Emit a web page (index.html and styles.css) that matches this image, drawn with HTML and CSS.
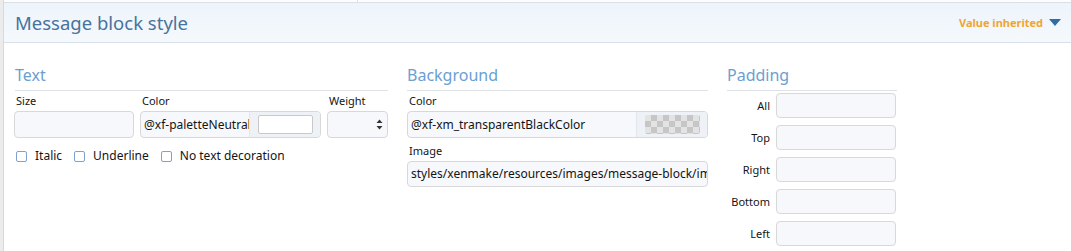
FILE: index.html
```html
<!DOCTYPE html>
<html lang="en">
<head>
    <meta charset="UTF-8">
    <meta name="viewport" content="width=device-width, initial-scale=1.0">
    <title>Message block style</title>
    <link rel="stylesheet" href="styles.css">
</head>
<body>

    <div class="frame">
        <!-- Leftover edge of the row above -->
        <div class="top-strip"><span class="top-divider"></span></div>

        <!-- Block header -->
        <div class="block-header">
            <h2 class="block-title">Message block style</h2>
            <span class="inherited">Value inherited <span class="caret"></span></span>
        </div>

        <div class="block-body">

            <!-- Text -->
            <div class="group group-text">
                <h3 class="group-title">Text</h3>
                <div class="field-row">
                    <div class="field field-size">
                        <label class="field-label">Size</label>
                        <div class="input"></div>
                    </div>
                    <div class="field field-color">
                        <label class="field-label">Color</label>
                        <div class="color-input">
                            <span class="color-value">@xf-paletteNeutral3</span>
                            <span class="color-swatch"><span class="swatch-box swatch-white"></span></span>
                        </div>
                    </div>
                    <div class="field field-weight">
                        <label class="field-label">Weight</label>
                        <div class="input select">
                            <svg width="7" height="11" viewBox="0 0 7 11">
                                <path d="M3.5 0.5 L6.5 4 L0.5 4 Z M3.5 10.5 L6.5 7 L0.5 7 Z" fill="#333"/>
                            </svg>
                        </div>
                    </div>
                </div>
                <div class="check-row">
                    <label class="check"><span class="box"></span>Italic</label>
                    <label class="check"><span class="box"></span>Underline</label>
                    <label class="check"><span class="box"></span>No text decoration</label>
                </div>
            </div>

            <!-- Background -->
            <div class="group group-bg">
                <h3 class="group-title">Background</h3>
                <label class="field-label">Color</label>
                <div class="color-input">
                    <span class="color-value">@xf-xm_transparentBlackColor</span>
                    <span class="color-swatch"><span class="swatch-box swatch-clear"></span></span>
                </div>
                <label class="field-label label-image">Image</label>
                <div class="input text-input">styles/xenmake/resources/images/message-block/image.png</div>
            </div>

            <!-- Padding -->
            <div class="group group-padding">
                <h3 class="group-title">Padding</h3>
                <div class="pad-row"><span class="pad-label">All</span><div class="input pad-input"></div></div>
                <div class="pad-row"><span class="pad-label">Top</span><div class="input pad-input"></div></div>
                <div class="pad-row"><span class="pad-label">Right</span><div class="input pad-input"></div></div>
                <div class="pad-row"><span class="pad-label">Bottom</span><div class="input pad-input"></div></div>
                <div class="pad-row"><span class="pad-label">Left</span><div class="input pad-input"></div></div>
            </div>

        </div>
    </div>

</body>
</html>
```

FILE: styles.css
```css
/* General Styles */
body {
    margin: 0;
    padding: 0;
    background-color: #ececec;
    font-family: "Segoe UI", "Noto Sans", "Open Sans", sans-serif;
    color: #141414;
}

.frame {
    margin-left: 3px;
    border-left: 1px solid #d9d9d9;
    background-color: #ffffff;
    height: 251px;
    overflow: hidden;
}

.top-strip {
    height: 2px;
    background-color: #fdfdfd;
}

.top-divider {
    display: block;
    width: 353px;
    height: 2px;
    border-right: 1px solid #e0e0e0;
}

/* Header */
.block-header {
    display: flex;
    align-items: center;
    justify-content: space-between;
    height: 39px;
    padding: 0 10px 0 11px;
    border-top: 1px solid #dcdfe3;
    border-bottom: 1px solid #d8e1ea;
    background: linear-gradient(to bottom, #edf4fb, #f5f9fd);
}

.block-title {
    margin: 0;
    font-size: 18.5px;
    font-weight: normal;
    color: #47739c;
}

.inherited {
    display: flex;
    align-items: center;
    font-size: 11px;
    font-weight: bold;
    color: #f0a531;
}

.caret {
    display: inline-block;
    margin-left: 6px;
    width: 0;
    height: 0;
    border-left: 6px solid transparent;
    border-right: 6px solid transparent;
    border-top: 7px solid #2f6da3;
}

/* Body */
.block-body {
    display: flex;
    gap: 19px;
    padding: 20px 0 0 11px;
}

.group-text {
    width: 373px;
}

.group-bg {
    width: 301px;
}

.group-padding {
    width: 170px;
}

.group-title {
    margin: 0;
    padding-bottom: 3px;
    line-height: 24px;
    font-size: 16px;
    font-weight: normal;
    color: #6aa0d2;
    border-bottom: 1px solid #dfe3e8;
}

.field-label {
    display: block;
    padding: 2px 0 0 2px;
    line-height: 16px;
    font-size: 11px;
}

.field-row {
    display: flex;
    gap: 6px;
}

.input {
    box-sizing: border-box;
    height: 27px;
    margin-top: 2px;
    border: 1px solid #d8d8d8;
    border-radius: 4px;
    background-color: #f6f8fb;
}

.field-size {
    width: 120px;
    margin-left: -1px;
}

.field-color {
    width: 181px;
}

.field-weight {
    width: 61px;
}

.select {
    display: flex;
    align-items: center;
    justify-content: flex-end;
    padding-right: 4px;
}

/* Color picker inputs */
.color-input {
    display: flex;
    box-sizing: border-box;
    height: 27px;
    margin-top: 2px;
    border: 1px solid #d8d8d8;
    border-radius: 4px;
    background-color: #f6f8fb;
    overflow: hidden;
}

.color-value {
    flex: 1;
    min-width: 0;
    padding: 0 3px;
    line-height: 25px;
    font-size: 12px;
    white-space: nowrap;
    overflow: hidden;
}

.color-swatch {
    display: flex;
    align-items: center;
    justify-content: center;
    width: 70px;
    border-left: 1px solid #e3e6ea;
    background-color: #eef1f5;
}

.swatch-box {
    box-sizing: border-box;
    width: 55px;
    height: 19px;
    border-radius: 2px;
}

.swatch-white {
    background-color: #ffffff;
    border: 1px solid #c9c9c9;
}

.swatch-clear {
    background: repeating-conic-gradient(#c6c6c6 0 25%, #e3e3e3 0 50%) 0 0 / 12px 12px;
}

.label-image {
    padding-top: 5px;
}

.text-input {
    height: 26px;
    padding: 0 3px;
    line-height: 24px;
    font-size: 12px;
    white-space: nowrap;
    overflow: hidden;
}

/* Checkboxes */
.check-row {
    display: flex;
    gap: 11px;
    margin-top: 9px;
    line-height: 18px;
    font-size: 12px;
}

.check {
    display: flex;
    align-items: center;
}

.check .box {
    box-sizing: border-box;
    width: 11px;
    height: 11px;
    margin: 0 8px 0 1px;
    border: 1px solid #7da3cc;
    border-radius: 2px;
    background-color: #ffffff;
}

/* Padding rows */
.pad-row {
    display: flex;
    align-items: center;
    gap: 6px;
    margin-top: 7px;
}

.pad-row:first-of-type {
    margin-top: 2px;
}

.pad-label {
    flex-shrink: 0;
    width: 43px;
    text-align: right;
    font-size: 11px;
    white-space: nowrap;
}

.pad-input {
    flex-shrink: 0;
    width: 120px;
    height: 25px;
    margin-top: 0;
}
```
